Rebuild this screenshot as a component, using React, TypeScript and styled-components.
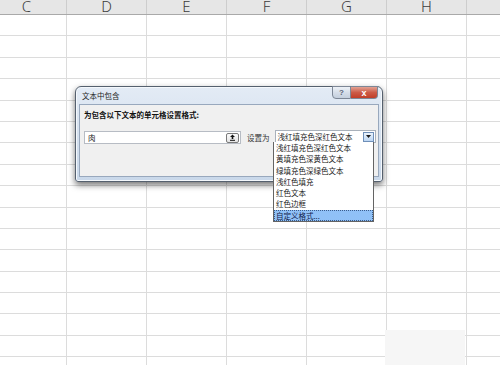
import React from "react"
import styled, { createGlobalStyle } from "styled-components"

//----------------------------------------------------------
//-- Sheet
//----------------------------------------------------------
const COLS = ["C", "D", "E", "F", "G", "H", "I"]
const ROW_COUNT = 17
const FONT = `"Noto Sans CJK SC", "Noto Sans", sans-serif`

const GlobalStyle = createGlobalStyle`
  html, body {
    margin: 0;
    padding: 0;
    background: #ffffff;
    overflow: hidden;
  }
`

const Page = styled.div`
  position: relative;
  width: 500px;
  height: 365px;
  overflow: hidden;
  font-family: ${ FONT };
`

const Sheet = styled.div`
  display: flex;
  flex-direction: column;
  margin-left: -13px;
`

const HeaderRow = styled.div`
  display: flex;
  height: 15px;
  background: #e6e6e6;
  border-bottom: 1px solid #a9a9a9;
  box-sizing: border-box;
  overflow: hidden;
`
const HeaderCell = styled.div`
  flex: 0 0 80px;
  box-sizing: border-box;
  border-right: 1px solid #cdcdcd;
  text-align: center;
  font-family: "Noto Sans", sans-serif;
  font-size: 15px;
  font-weight: 300;
  line-height: 12px;
  color: #3c3c3c;
`

const Row = styled.div`
  display: flex;
  height: 21.4px;
  box-sizing: border-box;
  border-bottom: 1px solid #dcdcdc;
`
const Cell = styled.div`
  flex: 0 0 80px;
  box-sizing: border-box;
  border-right: 1px solid #dcdcdc;
`

const Watermark = styled.div`
  position: absolute;
  left: 385px;
  top: 330px;
  width: 80px;
  height: 35px;
  background: #f6f6f6;
`

//----------------------------------------------------------
//-- Dialog
//----------------------------------------------------------
const Window = styled.div`
  position: absolute;
  left: 75px;
  top: 86px;
  width: 308px;
  height: 96px;
  box-sizing: border-box;
  display: flex;
  flex-direction: column;
  border: 1px solid #55606e;
  border-radius: 6px 6px 3px 3px;
  background: linear-gradient(180deg, #e3ebf5 0%, #d3dfee 60%, #c9d8ea 100%);
  box-shadow: 0 3px 6px rgba(0, 0, 0, 0.55), inset 0 0 0 1px #f4f8fc;
`
const TitleBar = styled.div`
  display: flex;
  align-items: flex-start;
  height: 17px;
  padding: 0 4px 0 6px;
`
const Title = styled.div`
  flex: 1;
  padding-top: 4px;
  font-size: 7.5px;
  line-height: 10px;
  color: #1e1e1e;
`
const CaptionButtons = styled.div`
  display: flex;
  margin-top: -1px;
`
const CaptionButton = styled.div<{ $close?: boolean }>`
  width: ${ (p) => (p.$close ? "27px" : "19px") };
  height: 13px;
  box-sizing: border-box;
  display: flex;
  align-items: center;
  justify-content: center;
  border: 1px solid #7d8796;
  border-left: ${ (p) => (p.$close ? "none" : "1px solid #7d8796") };
  border-radius: ${ (p) => (p.$close ? "0 0 4px 0" : "0 0 0 4px") };
  background: ${ (p) =>
    p.$close
      ? "linear-gradient(180deg, #e3a293 0%, #cc5b47 50%, #c13e28 100%)"
      : "linear-gradient(180deg, #eef2f7 0%, #d6dee9 50%, #c4cfdd 100%)" };
  color: ${ (p) => (p.$close ? "#ffffff" : "#5a6576") };
  font-family: "Liberation Sans", sans-serif;
  font-size: ${ (p) => (p.$close ? "9px" : "8px") };
  font-weight: bold;
`

const Content = styled.div`
  flex: 1;
  margin: 0 3px 4px 3px;
  padding: 5px 4px 0 4px;
  background: #f0f0f0;
  border: 1px solid #98a8bd;
`
const Prompt = styled.div`
  font-size: 7.5px;
  font-weight: bold;
  line-height: 10px;
  color: #111;
  white-space: nowrap;
`
const FieldRow = styled.div`
  display: flex;
  align-items: center;
  margin-top: 11px;
  white-space: nowrap;
`
const TextInput = styled.div`
  flex: 0 0 157px;
  height: 13px;
  box-sizing: border-box;
  display: flex;
  align-items: center;
  justify-content: space-between;
  padding: 0 1px 0 3px;
  background: #ffffff;
  border: 1px solid #b7bcc4;
  font-size: 7.5px;
  color: #222;
`
const RefButton = styled.div`
  width: 13px;
  height: 10px;
  box-sizing: border-box;
  display: flex;
  align-items: center;
  justify-content: center;
  border: 1px solid #7a7a7a;
  border-radius: 2px;
  background: linear-gradient(180deg, #fbfbfb, #e4e4e4);
`
const Label = styled.div`
  flex: 0 0 auto;
  margin-left: 6px;
  font-size: 7.5px;
  color: #333;
`
const Select = styled.div`
  flex: 0 0 101px;
  margin-left: 5px;
  margin-top: -2px;
  height: 13px;
  box-sizing: border-box;
  display: flex;
  align-items: center;
  justify-content: space-between;
  padding: 0 1px 0 2px;
  background: #ffffff;
  border: 1px solid #a9b1bb;
  font-size: 7.5px;
  color: #222;
  overflow: hidden;
`
const SelectArrow = styled.div`
  flex: 0 0 11px;
  height: 10px;
  box-sizing: border-box;
  display: flex;
  align-items: center;
  justify-content: center;
  border: 1px solid #6f8fb8;
  background: linear-gradient(180deg, #eaf3fd, #bcd6f3);
`

//----------------------------------------------------------
//-- Dropdown list
//----------------------------------------------------------
const ListBox = styled.ul`
  position: absolute;
  left: 273px;
  top: 142px;
  width: 101px;
  margin: 0;
  padding: 0;
  list-style: none;
  box-sizing: border-box;
  background: #ffffff;
  border: 1px solid #646464;
  border-top: none;
`
const ListItem = styled.li<{ $active?: boolean }>`
  height: 11.3px;
  padding-left: 2px;
  box-sizing: border-box;
  font-size: 7.5px;
  line-height: 11px;
  white-space: nowrap;
  color: ${ (p) => (p.$active ? "#10204a" : "#222") };
  background: ${ (p) => (p.$active ? "#90c1f7" : "transparent") };
  outline: ${ (p) => (p.$active ? "1px dotted #3a5c8c" : "none") };
  outline-offset: -1px;
`

const OPTIONS = [
  "浅红填充色深红色文本",
  "黄填充色深黄色文本",
  "绿填充色深绿色文本",
  "浅红色填充",
  "红色文本",
  "红色边框",
  "自定义格式...",
]

const App: React.FC = () =>
{
  return (
    <Page>
      <GlobalStyle />
      <Sheet>
        <HeaderRow>
          {COLS.map((c) => (
            <HeaderCell key={c}>{c}</HeaderCell>
          ))}
        </HeaderRow>
        {Array.from({ length: ROW_COUNT }).map((_, r) => (
          <Row key={r}>
            {COLS.map((c) => (
              <Cell key={c} />
            ))}
          </Row>
        ))}
      </Sheet>

      <Watermark />

      <Window>
        <TitleBar>
          <Title>文本中包含</Title>
          <CaptionButtons>
            <CaptionButton>?</CaptionButton>
            <CaptionButton $close>x</CaptionButton>
          </CaptionButtons>
        </TitleBar>
        <Content>
          <Prompt>为包含以下文本的单元格设置格式:</Prompt>
          <FieldRow>
            <TextInput>
              <span>肉</span>
              <RefButton>
                <svg width="7" height="7" viewBox="0 0 7 7">
                  <path d="M3.5 0.5 L6 3 H4.3 V5 H2.7 V3 H1 Z" fill="#111" />
                  <rect x="1" y="5.8" width="5" height="1" fill="#111" />
                </svg>
              </RefButton>
            </TextInput>
            <Label>设置为</Label>
            <Select>
              <span>浅红填充色深红色文本</span>
              <SelectArrow>
                <svg width="5" height="3" viewBox="0 0 5 3">
                  <path d="M0 0 H5 L2.5 3 Z" fill="#1a1a1a" />
                </svg>
              </SelectArrow>
            </Select>
          </FieldRow>
        </Content>
      </Window>

      <ListBox>
        {OPTIONS.map((o, i) => (
          <ListItem key={o} $active={i === OPTIONS.length - 1}>
            {o}
          </ListItem>
        ))}
      </ListBox>
    </Page>
  )
}

export default App
